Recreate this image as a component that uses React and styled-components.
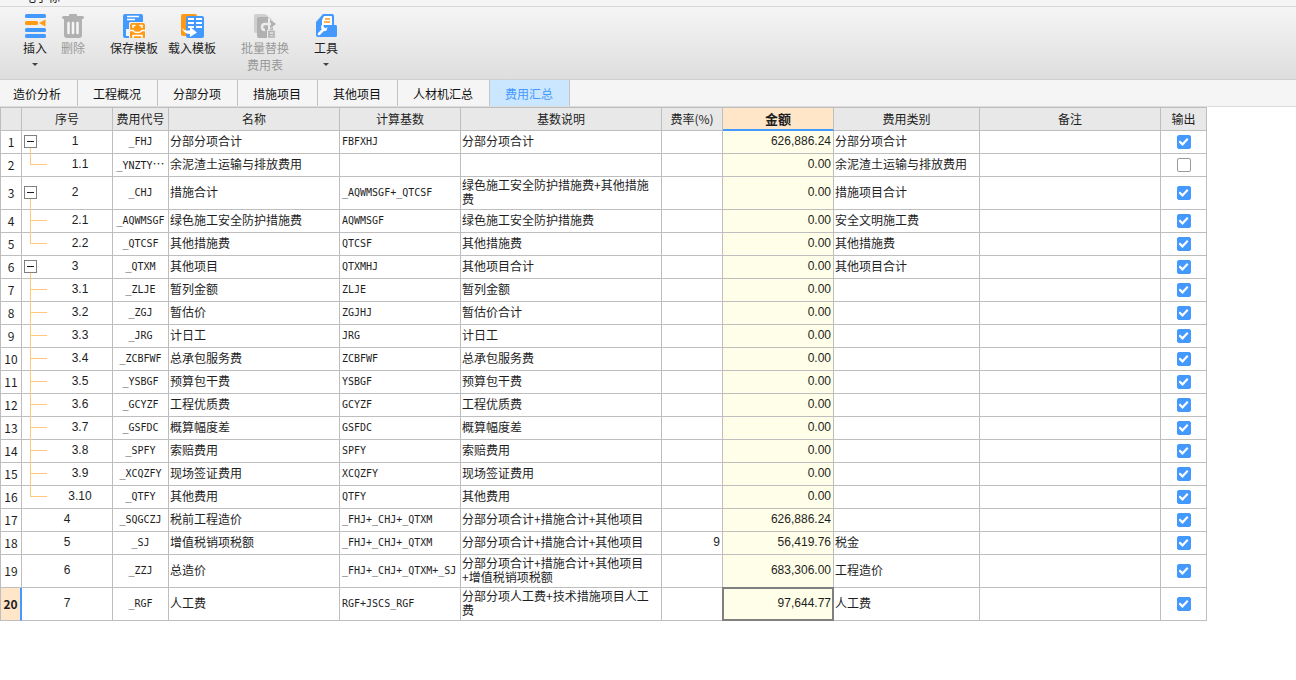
import { useState } from 'react';
import styled, { createGlobalStyle } from 'styled-components';

const TABS = [
  '造价分析',
  '工程概况',
  '分部分项',
  '措施项目',
  '其他项目',
  '人材机汇总',
  '费用汇总',
];

const COLUMNS = [
  { title: '序号', width: 91 },
  { title: '费用代号', width: 56 },
  { title: '名称', width: 171 },
  { title: '计算基数', width: 121 },
  { title: '基数说明', width: 201 },
  { title: '费率(%)', width: 61 },
  { title: '金额', width: 111, active: true },
  { title: '费用类别', width: 146 },
  { title: '备注', width: 181 },
  { title: '输出', width: 46 },
];

// tree: open = expandable parent, mid = child, end = last child
const ROWS = [
  { tree: 'open', no: '1', code: '_FHJ', name: '分部分项合计', base: 'FBFXHJ', note: '分部分项合计', amount: '626,886.24', kind: '分部分项合计', output: true },
  { tree: 'end', no: '1.1', code: '_YNZTY', cut: true, name: '余泥渣土运输与排放费用', amount: '0.00', kind: '余泥渣土运输与排放费用', output: false },
  { tree: 'open', no: '2', code: '_CHJ', name: '措施合计', base: '_AQWMSGF+_QTCSF', note: '绿色施工安全防护措施费+其他措施费', amount: '0.00', kind: '措施项目合计', output: true, tall: true },
  { tree: 'mid', no: '2.1', code: '_AQWMSGF', name: '绿色施工安全防护措施费', base: 'AQWMSGF', note: '绿色施工安全防护措施费', amount: '0.00', kind: '安全文明施工费', output: true },
  { tree: 'end', no: '2.2', code: '_QTCSF', name: '其他措施费', base: 'QTCSF', note: '其他措施费', amount: '0.00', kind: '其他措施费', output: true },
  { tree: 'open', no: '3', code: '_QTXM', name: '其他项目', base: 'QTXMHJ', note: '其他项目合计', amount: '0.00', kind: '其他项目合计', output: true },
  { tree: 'mid', no: '3.1', code: '_ZLJE', name: '暂列金额', base: 'ZLJE', note: '暂列金额', amount: '0.00', output: true },
  { tree: 'mid', no: '3.2', code: '_ZGJ', name: '暂估价', base: 'ZGJHJ', note: '暂估价合计', amount: '0.00', output: true },
  { tree: 'mid', no: '3.3', code: '_JRG', name: '计日工', base: 'JRG', note: '计日工', amount: '0.00', output: true },
  { tree: 'mid', no: '3.4', code: '_ZCBFWF', name: '总承包服务费', base: 'ZCBFWF', note: '总承包服务费', amount: '0.00', output: true },
  { tree: 'mid', no: '3.5', code: '_YSBGF', name: '预算包干费', base: 'YSBGF', note: '预算包干费', amount: '0.00', output: true },
  { tree: 'mid', no: '3.6', code: '_GCYZF', name: '工程优质费', base: 'GCYZF', note: '工程优质费', amount: '0.00', output: true },
  { tree: 'mid', no: '3.7', code: '_GSFDC', name: '概算幅度差', base: 'GSFDC', note: '概算幅度差', amount: '0.00', output: true },
  { tree: 'mid', no: '3.8', code: '_SPFY', name: '索赔费用', base: 'SPFY', note: '索赔费用', amount: '0.00', output: true },
  { tree: 'mid', no: '3.9', code: '_XCQZFY', name: '现场签证费用', base: 'XCQZFY', note: '现场签证费用', amount: '0.00', output: true },
  { tree: 'end', no: '3.10', code: '_QTFY', name: '其他费用', base: 'QTFY', note: '其他费用', amount: '0.00', output: true },
  { no: '4', code: '_SQGCZJ', name: '税前工程造价', base: '_FHJ+_CHJ+_QTXM', note: '分部分项合计+措施合计+其他项目', amount: '626,886.24', output: true },
  { no: '5', code: '_SJ', name: '增值税销项税额', base: '_FHJ+_CHJ+_QTXM', note: '分部分项合计+措施合计+其他项目', rate: '9', amount: '56,419.76', kind: '税金', output: true },
  { no: '6', code: '_ZZJ', name: '总造价', base: '_FHJ+_CHJ+_QTXM+_SJ', note: '分部分项合计+措施合计+其他项目+增值税销项税额', amount: '683,306.00', kind: '工程造价', output: true, tall: true },
  { no: '7', code: '_RGF', name: '人工费', base: 'RGF+JSCS_RGF', note: '分部分项人工费+技术措施项目人工费', amount: '97,644.77', kind: '人工费', output: true, tall: true, current: true },
];

export default function App() {
  const [activeTab, setActiveTab] = useState('费用汇总');
  const [rows, setRows] = useState(ROWS);

  function toggleOutput(no) {
    setRows(
      rows.map(row => (row.no === no ? { ...row, output: !row.output } : row))
    );
  }

  return (
    <>
      <GlobalStyle />
      <MenuStrip>
        <MenuTitle>电子标</MenuTitle>
      </MenuStrip>
      <Toolbar>
        <ToolGroup $gap={14}>
          <ToolButton>
            <InsertIcon />
            插入
            <Caret />
          </ToolButton>
          <ToolButton disabled>
            <TrashIcon />
            删除
          </ToolButton>
        </ToolGroup>
        <ToolGroup $gap={10}>
          <ToolButton>
            <SaveIcon />
            保存模板
          </ToolButton>
          <ToolButton>
            <LoadIcon />
            载入模板
          </ToolButton>
        </ToolGroup>
        <ToolGroup>
          <ToolButton disabled>
            <ReplaceIcon />
            批量替换
            <br />
            费用表
          </ToolButton>
        </ToolGroup>
        <ToolGroup>
          <ToolButton>
            <WrenchIcon />
            工具
            <Caret />
          </ToolButton>
        </ToolGroup>
      </Toolbar>
      <TabBar>
        {TABS.map(tab => (
          <Tab
            key={tab}
            $active={tab === activeTab}
            onClick={() => setActiveTab(tab)}
          >
            {tab}
          </Tab>
        ))}
      </TabBar>
      <Sheet>
        <colgroup>
          <Column $width={21} />
          {COLUMNS.map(({ title, width }) => (
            <Column key={title} $width={width} />
          ))}
        </colgroup>
        <thead>
          <tr>
            <HeadCell />
            {COLUMNS.map(({ title, active }) => (
              <HeadCell key={title} scope="col" $active={active}>
                {title}
              </HeadCell>
            ))}
          </tr>
        </thead>
        <tbody>
          {rows.map((row, index) => (
            <Row key={row.no} $tall={row.tall}>
              <RowHead scope="row" $current={row.current}>
                {index + 1}
              </RowHead>
              <TreeCell $tree={row.tree}>
                {row.tree && <Branch $tree={row.tree} />}
                {row.tree === 'open' && <Expander aria-label="折叠" />}
                {row.no}
              </TreeCell>
              <CodeCell $center>
                {row.code}
                {row.cut && <Ellipsis lang="zh-CN">…</Ellipsis>}
              </CodeCell>
              <Cell>{row.name}</Cell>
              <CodeCell>{row.base}</CodeCell>
              <Cell>{row.note}</Cell>
              <NumberCell>{row.rate}</NumberCell>
              <AmountCell $current={row.current}>{row.amount}</AmountCell>
              <Cell>{row.kind}</Cell>
              <Cell />
              <CheckCell>
                <CheckBox
                  type="checkbox"
                  aria-label={`输出 ${row.name}`}
                  checked={row.output}
                  onChange={() => toggleOutput(row.no)}
                />
              </CheckCell>
            </Row>
          ))}
        </tbody>
      </Sheet>
    </>
  );
}

function InsertIcon() {
  return (
    <Icon viewBox="0 0 24 25" aria-hidden="true">
      <g fill="#4499ff">
        <rect x="2" y="1" width="21" height="4" rx="1.5" />
        <rect x="2" y="15" width="21" height="4" rx="1.5" />
        <rect x="2" y="21" width="21" height="4" rx="1.5" />
      </g>
      <rect x="2" y="8" width="13" height="4" rx="1.5" fill="#ff9a14" />
      <path d="M16 10 L22.5 6.5 V13.5 Z" fill="#ff9a14" />
    </Icon>
  );
}

function TrashIcon() {
  return (
    <Icon viewBox="0 0 24 25" aria-hidden="true">
      <path
        d="M8 3V2Q8 1 9 1H15Q16 1 16 2V3H21.500Q23 3 23 4.500T21.500 6H2.500Q1 6 1 4.500T2.500 3Z"
        fill="#b1b1b1"
      />
      <path d="M3 6H21V22Q21 25 18 25H6Q3 25 3 22Z" fill="#b1b1b1" />
      <path d="M7.500 10V20M12 10V20M16.500 10V20" stroke="#f6f6f6" strokeWidth="2.500" strokeLinecap="round" />
    </Icon>
  );
}

function SaveIcon() {
  return (
    <Icon viewBox="0 0 24 25" aria-hidden="true">
      <rect x="1" y="1" width="20" height="24" rx="2" fill="#4499ff" />
      <path d="M5 3.500H17M5 6.500H13" stroke="#fff" strokeWidth="1.500" />
      <path d="M4 16H8V23H4Z" fill="#f1f5fa" />
      <path d="M8 9H24V25H7V10Z" fill="#f1f1f1" />
      <path
        d="M10 10H21Q23 10 23 12V25H8V12Q8 10 10 10Z"
        fill="#ff9a14"
      />
      <path d="M11 15V12.500H13.500M17.500 12.500H20V15" stroke="#fff" strokeWidth="1.500" fill="none" />
      <path d="M8 17.500H11Q12 19.500 15.500 19.500T20 17.500H23" stroke="#fff" strokeWidth="1.500" fill="none" />
      <path d="M11 25V22.500H20V25" stroke="#fff" strokeWidth="1.500" fill="none" />
    </Icon>
  );
}

function LoadIcon() {
  return (
    <Icon viewBox="0 0 24 25" aria-hidden="true">
      <rect x="1" y="1" width="16" height="22" rx="2" fill="#ff9a14" />
      <rect x="6" y="3" width="18" height="22" rx="2" fill="#4499ff" />
      <path
        d="M8 6H14M16 6H22M8 10H14M16 10H22M8 14H14M16 14H22"
        stroke="#fff"
        strokeWidth="2"
      />
      <path
        d="M2 15Q4 18 10 17.500V14L17 19.500L10 24V21Q4 21 2 15Z"
        fill="#fff"
      />
    </Icon>
  );
}

function ReplaceIcon() {
  return (
    <Icon viewBox="0 0 24 25" aria-hidden="true">
      <path d="M3 1H12L15 3V20H3Q1 20 1 18V3Q1 1 3 1Z" fill="#cfcfcf" />
      <path d="M6 4H16L20 8V25H6Q4 25 4 23V6Q4 4 6 4Z" fill="#b1b1b1" />
      <path
        d="M15 4L24 11L15 18Z"
        fill="#ececec"
      />
      <path d="M17 6.500L23 11L17 15.500Z" fill="#b1b1b1" />
      <path d="M18 11H12Q9 11 9 14T12 17" stroke="#ececec" strokeWidth="2.500" fill="none" />
      <rect x="14" y="17" width="10" height="8" fill="#e9e9e9" />
      <path d="M16 18.500H21V24H16ZM16 21.500H21" stroke="#b1b1b1" strokeWidth="1.500" fill="none" />
    </Icon>
  );
}

function WrenchIcon() {
  return (
    <Icon viewBox="0 0 24 25" aria-hidden="true">
      <path d="M9 1H18Q20 1 20 3V12H22Q23 12 23 14V23Q23 24 21 24H4Q2 24 2 22V9Z" fill="#4499ff" />
      <path d="M10 3H17Q18 3 18 4V12H8V7Z" fill="#fff" />
      <path d="M11 6H16M10 9H16" stroke="#ff9a14" strokeWidth="1.500" />
      <path d="M8 12H20V14H8Z" fill="#4499ff" />
      <path d="M5 21L10 16" stroke="#fff" strokeWidth="2.500" strokeLinecap="round" />
      <path d="M10 10Q6 12 7.500 16Q9 19 12.500 17.500L13.500 14L11 15.500L9.500 13.500Z" fill="#fff" />
    </Icon>
  );
}

function Caret() {
  return (
    <CaretIcon viewBox="0 0 6 3" aria-hidden="true">
      <path d="M0 0H6L3 3Z" fill="#444" />
    </CaretIcon>
  );
}

const GlobalStyle = createGlobalStyle`
  * {
    box-sizing: border-box;
  }

  body {
    margin: 0;
    background: #fff;
    color: #1e1e1e;
    font: 12px/14px 'Noto Sans CJK SC', sans-serif;
  }

  button {
    font: inherit;
    color: inherit;
    border: none;
    background: none;
    padding: 0;
  }
`;

const MenuStrip = styled.header`
  display: flex;
  align-items: flex-end;
  height: 7px;
  padding: 0 24px 2px;
  overflow: hidden;
  background: #f5f5f5;
  border-bottom: 1px solid #d6d6d6;
`;

const MenuTitle = styled.span`
  line-height: 14px;
`;

const Toolbar = styled.div`
  display: flex;
  gap: 25px;
  height: 73px;
  padding: 6px 23px 0;
  background: linear-gradient(#f5f5f5, #dedede);
  border-bottom: 1px solid #cfcfcf;
`;

const ToolGroup = styled.div`
  display: flex;
  align-items: flex-start;
  gap: ${({ $gap = 0 }) => $gap}px;
`;

const ToolButton = styled.button`
  display: block;
  line-height: 17px;
  text-align: center;
  white-space: nowrap;

  &:disabled {
    color: #999;
  }
`;

const Icon = styled.svg`
  display: block;
  width: 24px;
  height: 25px;
  margin: 0 auto 1px;
`;

const CaretIcon = styled.svg`
  display: block;
  width: 6px;
  height: 3px;
  margin: 7px auto 0;
`;

const TabBar = styled.nav`
  display: flex;
  height: 27px;
  background: #f5f5f5;
  border-bottom: 1px solid #dcdcdc;
`;

const Tab = styled.button`
  padding: 1px 16px 0 15px;
  border-right: 1px solid #c4c4c4;
  background: ${({ $active }) => ($active ? '#cbe6ff' : '#f5f5f5')};
  color: ${({ $active }) => ($active ? '#4499ff' : '#111')};

  &:first-child {
    padding-left: 13px;
  }
`;

const Sheet = styled.table`
  width: 1207px;
  table-layout: fixed;
  border-collapse: separate;
  border-spacing: 0;
  border: solid #bebebe;
  border-width: 1px 0 0 1px;
`;

const Column = styled.col`
  width: ${({ $width }) => $width}px;
`;

const Row = styled.tr`
  height: ${({ $tall }) => ($tall ? 33 : 23)}px;
`;

const HeadCell = styled.th`
  height: 23px;
  padding: 0;
  border: solid #bebebe;
  border-width: 0 1px 1px 0;
  background: ${({ $active }) => ($active ? '#ffe6c9' : '#e8e8e8')};
  font-size: ${({ $active }) => ($active ? 13 : 12)}px;
  font-weight: ${({ $active }) => ($active ? 700 : 400)};
  white-space: nowrap;
  ${({ $active }) => $active && 'border-bottom: 2px solid #4499ff;'}
`;

const RowHead = styled.th`
  padding: 0;
  border: solid #bebebe;
  border-width: 0 1px 1px 0;
  background: ${({ $current }) => ($current ? '#ffe6c9' : '#fff')};
  font-weight: ${({ $current }) => ($current ? 700 : 400)};
  ${({ $current }) => $current && 'border-right: 2px solid #4499ff;'}
`;

const Cell = styled.td`
  padding: 0 2px 2px 1px;
  border: solid #bebebe;
  border-width: 0 1px 1px 0;
`;

const CodeCell = styled(Cell)`
  padding: 0 0 0 ${({ $center }) => ($center ? 0 : 2)}px;
  font-family: 'DejaVu Sans Mono', monospace;
  font-size: 10px;
  text-align: ${({ $center }) => ($center ? 'center' : 'left')};
  white-space: nowrap;
`;

const Ellipsis = styled.span`
  font-family: 'Noto Sans CJK SC', sans-serif;
  font-size: 12px;
`;

const NumberCell = styled(Cell)`
  font-family: 'Liberation Sans', sans-serif;
  text-align: right;
`;

const AmountCell = styled(NumberCell)`
  position: relative;
  background: #fffee8;

  &::after {
    content: ${({ $current }) => ($current ? "''" : 'none')};
    position: absolute;
    inset: -1px;
    border: 2px solid #808080;
  }
`;

const INDENT = { open: 16, mid: 26, end: 26 };

const TreeCell = styled(Cell)`
  position: relative;
  padding: 0 0 2px ${({ $tree }) => INDENT[$tree] || 0}px;
  font-family: 'Liberation Sans', sans-serif;
  text-align: center;
`;

const Branch = styled.span`
  position: absolute;
  left: 8px;
  top: ${({ $tree }) => ($tree === 'open' ? '50%' : '-1px')};
  bottom: ${({ $tree }) => ($tree === 'end' ? '50%' : '-1px')};
  width: 17px;
  border-left: 1px solid #ffc87a;
  border-bottom: ${({ $tree }) => ($tree === 'end' ? '1px solid #ffc87a' : 'none')};

  &::after {
    content: ${({ $tree }) => ($tree === 'mid' ? "''" : 'none')};
    position: absolute;
    left: 0;
    right: 0;
    bottom: 50%;
    border-top: 1px solid #ffc87a;
  }
`;

const Expander = styled.button`
  position: absolute;
  left: 2px;
  top: calc(50% - 7px);
  display: grid;
  place-items: center;
  width: 13px;
  height: 13px;
  border: 1px solid #808080;
  background: #fff;

  &::before {
    content: '';
    width: 7px;
    height: 1px;
    background: #1e1e1e;
  }
`;

const CheckCell = styled(Cell)`
  padding: 0;
`;

const CheckBox = styled.input`
  appearance: none;
  display: grid;
  place-items: center;
  width: 14px;
  height: 14px;
  margin: 0 auto;
  border: 1px solid #999;
  border-radius: 2px;
  background: #fff;

  &:checked {
    border-color: #4499ff;
    background: #4499ff;
  }

  &:checked::before {
    content: '';
    width: 10px;
    height: 8px;
    background: #fff;
    clip-path: polygon(0 50%, 15% 30%, 40% 60%, 85% 0, 100% 18%, 40% 100%);
  }
`;
